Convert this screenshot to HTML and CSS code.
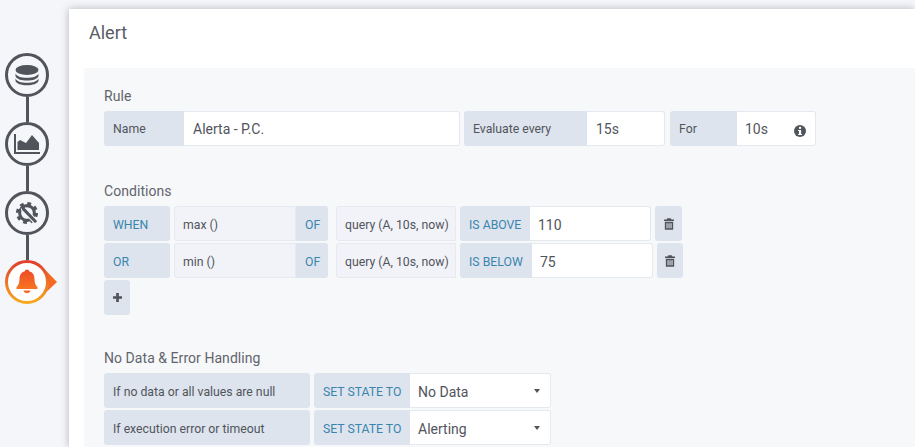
FILE: index.html
```html
<!DOCTYPE html>
<html lang="en">
<head>
    <meta charset="UTF-8">
    <title>Alert</title>
    <link rel="stylesheet" href="styles.css">
</head>
<body>
    <div class="page">
        <nav class="steps">
            <div class="step">
                <svg viewBox="0 0 30 24" width="30" height="24">
                    <ellipse cx="15" cy="7" rx="11.500" ry="5" fill="#52545c"/>
                    <path d="M3.500 10.500c1 2.800 5.600 4.300 11.500 4.300s10.500-1.500 11.500-4.300v2.800c-1 2.800-5.600 4.300-11.500 4.300s-10.500-1.500-11.500-4.300z" fill="#52545c"/>
                    <path d="M3.500 15.500c1 2.800 5.600 4.300 11.500 4.300s10.500-1.500 11.500-4.300v2.500c-1 2.800-5.600 4.200-11.500 4.200s-10.500-1.400-11.500-4.200z" fill="#52545c"/>
                </svg>
            </div>
            <div class="link"></div>
            <div class="step">
                <svg viewBox="0 0 30 30" width="30" height="30">
                    <path d="M2 5h2v18h24v2H2z" fill="#52545c"/>
                    <path d="M5.500 21v-8l2.500-2 6 3 6-8 7 8v7z" fill="#52545c"/>
                </svg>
            </div>
            <div class="link"></div>
            <div class="step">
                <svg viewBox="0 0 30 30" width="26" height="26">
                    <circle cx="15" cy="15" r="10.500" fill="none" stroke="#52545c" stroke-width="4.500" stroke-dasharray="4.200 4.050"/>
                    <circle cx="15" cy="15" r="8.500" fill="none" stroke="#52545c" stroke-width="3.500"/>
                    <path d="M11 10.500l13.500 14" stroke="#f5f6f9" stroke-width="6" stroke-linecap="round"/>
                    <path d="M11 10.500l13.500 14" stroke="#52545c" stroke-width="3.500" stroke-linecap="round"/>
                    <path d="M7.500 8.500l3-3 4 1.500-4.500 4.500z" fill="#52545c"/>
                </svg>
            </div>
            <div class="link"></div>
            <div class="step step-active">
                <svg class="step-ring" viewBox="0 0 54 46" width="54" height="46">
                    <defs>
                        <linearGradient id="ringFill" x1="0" y1="0" x2="0" y2="1">
                            <stop offset="0" stop-color="#e0402f"/>
                            <stop offset="1" stop-color="#f6a81f"/>
                        </linearGradient>
                        <linearGradient id="bellFill" x1="0" y1="0" x2="0" y2="1">
                            <stop offset="0" stop-color="#ee4a26"/>
                            <stop offset="1" stop-color="#f8741f"/>
                        </linearGradient>
                    </defs>
                    <path d="M36 6.500L52 23 36 38z" fill="#f46a22"/>
                    <circle cx="22" cy="23" r="20.500" fill="#fff" stroke="url(#ringFill)" stroke-width="3"/>
                    <path d="M22 10.500c1.200 0 2 .8 2.100 1.800 3.900 1 5.400 4 5.400 7.900 0 4 1.200 6.300 3 7.800v2H11.500v-2c1.800-1.500 3-3.800 3-7.800 0-3.900 1.500-6.900 5.400-7.900.1-1 .9-1.800 2.100-1.800z" fill="url(#bellFill)"/>
                    <path d="M18.500 31.500h7c-.4 1.800-1.800 2.800-3.500 2.800s-3.100-1-3.500-2.800z" fill="#f46a22"/>
                </svg>
            </div>
        </nav>

        <main class="panel">
            <h2 class="panel-title">Alert</h2>
            <div class="panel-body">
                <section class="group group-rule">
                    <h5 class="group-title">Rule</h5>
                    <div class="row">
                        <div class="field">
                            <span class="label w-80">Name</span>
                            <span class="input w-276">Alerta - P.C.</span>
                        </div>
                        <div class="field">
                            <span class="label w-123">Evaluate every</span>
                            <span class="input w-78">15s</span>
                        </div>
                        <div class="field field-last">
                            <span class="label w-67">For</span>
                            <span class="input input-info w-79">10s
                                <svg class="info" viewBox="0 0 14 14" width="12" height="12">
                                    <circle cx="7" cy="7" r="7" fill="#52545c"/>
                                    <rect x="5.800" y="2.200" width="2.500" height="2.300" fill="#fff"/>
                                    <path d="M4.800 5.700h3.500v4.700h1.100v1.400H4.800v-1.400h1v-3.300h-1z" fill="#fff"/>
                                </svg>
                            </span>
                        </div>
                    </div>
                </section>

                <section class="group group-conditions">
                    <h5 class="group-title">Conditions</h5>
                    <div class="row row-tight">
                        <span class="label keyword w-66">WHEN</span>
                        <span class="func w-122">max ()</span>
                        <span class="label keyword w-32 after-func">OF</span>
                        <span class="func w-120">query (A, 10s, now)</span>
                        <div class="field">
                            <span class="label keyword w-70">IS ABOVE</span>
                            <span class="input w-121">110</span>
                        </div>
                        <span class="label icon-btn w-27">
                            <svg viewBox="0 0 12 14" width="10" height="12">
                                <path d="M4 0h4l1 1.500h3v1.800H0V1.500h3zM1 4.300h10V14H1zM3 6v6h1.300V6zm2.400 0v6h1.300V6zM7.800 6v6h1.300V6z" fill="#52545c" fill-rule="evenodd"/>
                            </svg>
                        </span>
                    </div>
                    <div class="row row-tight">
                        <span class="label keyword w-66">OR</span>
                        <span class="func w-122">min ()</span>
                        <span class="label keyword w-32 after-func">OF</span>
                        <span class="func w-120">query (A, 10s, now)</span>
                        <div class="field">
                            <span class="label keyword w-72">IS BELOW</span>
                            <span class="input w-121">75</span>
                        </div>
                        <span class="label icon-btn w-26">
                            <svg viewBox="0 0 12 14" width="10" height="12">
                                <path d="M4 0h4l1 1.500h3v1.800H0V1.500h3zM1 4.300h10V14H1zM3 6v6h1.300V6zm2.400 0v6h1.300V6zM7.800 6v6h1.300V6z" fill="#52545c" fill-rule="evenodd"/>
                            </svg>
                        </span>
                    </div>
                    <div class="row">
                        <span class="label icon-btn w-26">
                            <svg viewBox="0 0 10 10" width="9" height="9">
                                <path d="M3.500 0h3v3.500H10v3H6.500V10h-3V6.500H0v-3h3.500z" fill="#52545c"/>
                            </svg>
                        </span>
                    </div>
                </section>

                <section class="group group-nodata">
                    <h5 class="group-title">No Data &amp; Error Handling</h5>
                    <div class="row row-tight">
                        <span class="label w-206">If no data or all values are null</span>
                        <div class="field">
                            <span class="label keyword w-96">SET STATE TO</span>
                            <span class="input select w-141">No Data</span>
                        </div>
                    </div>
                    <div class="row row-tight">
                        <span class="label w-206">If execution error or timeout</span>
                        <div class="field">
                            <span class="label keyword w-96">SET STATE TO</span>
                            <span class="input select w-141">Alerting</span>
                        </div>
                    </div>
                </section>
            </div>
        </main>
    </div>
</body>
</html>
```

FILE: styles.css
```css
html, body {
    margin: 0;
    height: 100%;
    overflow: hidden;
}
body {
    background-color: #f5f6f9;
    font-family: Roboto, "Liberation Sans", sans-serif;
    color: #52545c;
}
.page {
    display: flex;
    height: 447px;
    overflow: hidden;
}

/* left side steps */
.steps {
    width: 69px;
    flex: none;
    padding: 53px 0 0 5px;
    box-sizing: border-box;
}
.step {
    width: 44px;
    height: 44px;
    box-sizing: border-box;
    border: 3px solid #52545c;
    border-radius: 50%;
    background-color: #f5f6f9;
    display: flex;
    align-items: center;
    justify-content: center;
}
.step-active {
    border: 0;
    position: relative;
}
.step-ring {
    position: absolute;
    left: -0.5px;
    top: -1px;
}
.step svg {
    display: block;
    flex: none;
}
.link {
    width: 3px;
    height: 25px;
    margin-left: 21px;
    background-color: #52545c;
}

/* main panel */
.panel {
    flex: 1;
    margin-top: 9px;
    background-color: #fff;
    box-shadow: 0 0 8px rgba(60, 65, 85, 0.35);
    min-width: 0;
}
.panel-title {
    margin: 0 0 12px;
    padding: 13px 0 0 20px;
    height: 34px;
    font-size: 18px;
    font-weight: 400;
    line-height: 22px;
    color: #5a5c64;
}
.panel-body {
    margin-left: 15px;
    height: 391px;
    box-sizing: border-box;
    background-color: #f7f8fa;
    padding: 20px 0 0 20px;
    border-top-left-radius: 3px;
}
.group-title {
    margin: 0 0 7px;
    font-size: 14px;
    font-weight: 400;
    line-height: 16px;
    letter-spacing: 0.05px;
    color: #62646c;
}
.group-conditions {
    margin-top: 37px;
}
.group-nodata {
    margin-top: 35px;
}

/* rows */
.row {
    display: flex;
    gap: 4px;
    height: 35px;
    margin-bottom: 2px;
}
.field {
    display: flex;
}
.field-last {
    margin-left: 1px;
}
.label, .input, .func {
    display: flex;
    align-items: center;
    box-sizing: border-box;
    height: 35px;
    padding-left: 9px;
    white-space: nowrap;
}
.label {
    background-color: #dde4ed;
    border-radius: 3px;
    font-size: 12.250px;
}
.field .label {
    border-radius: 3px 0 0 3px;
}
.input {
    background-color: #fff;
    border: 1px solid #e4e9f0;
    border-left: 0;
    border-radius: 0 3px 3px 0;
    font-size: 14px;
}
.row-tight .label, .row-tight .input, .row-tight .func {
    padding-top: 2px;
}
.row-tight .input {
    padding-left: 8px;
}
.input-info {
    justify-content: space-between;
    padding-left: 8px;
    padding-right: 9px;
}
.info {
    margin-top: 4px;
}
.keyword {
    color: #3a85ad;
}
.func {
    background-color: #f1f3f8;
    border: 1px solid #e6e9f1;
    border-radius: 3px 0 0 3px;
    padding-left: 8px;
    font-size: 12.250px;
}
.after-func {
    margin-left: -4px;
    border-radius: 0 3px 3px 0;
    margin-right: 4px;
}
.icon-btn {
    justify-content: center;
    padding-left: 0;
}
.row-tight .icon-btn {
    padding-top: 0;
}
.select {
    position: relative;
}
.select::after {
    content: "";
    position: absolute;
    right: 10px;
    top: 15px;
    border-left: 3.500px solid transparent;
    border-right: 3.500px solid transparent;
    border-top: 4px solid #52545c;
}

/* widths */
.w-26 { width: 26px; }
.w-27 { width: 27px; }
.w-32 { width: 32px; }
.w-66 { width: 66px; }
.w-67 { width: 67px; }
.w-70 { width: 70px; }
.w-72 { width: 72px; }
.w-78 { width: 78px; }
.w-79 { width: 79px; }
.w-80 { width: 80px; }
.w-96 { width: 96px; }
.w-120 { width: 120px; }
.w-121 { width: 121px; }
.w-122 { width: 122px; }
.w-123 { width: 123px; }
.w-141 { width: 141px; }
.w-206 { width: 206px; }
.w-276 { width: 276px; }
```
